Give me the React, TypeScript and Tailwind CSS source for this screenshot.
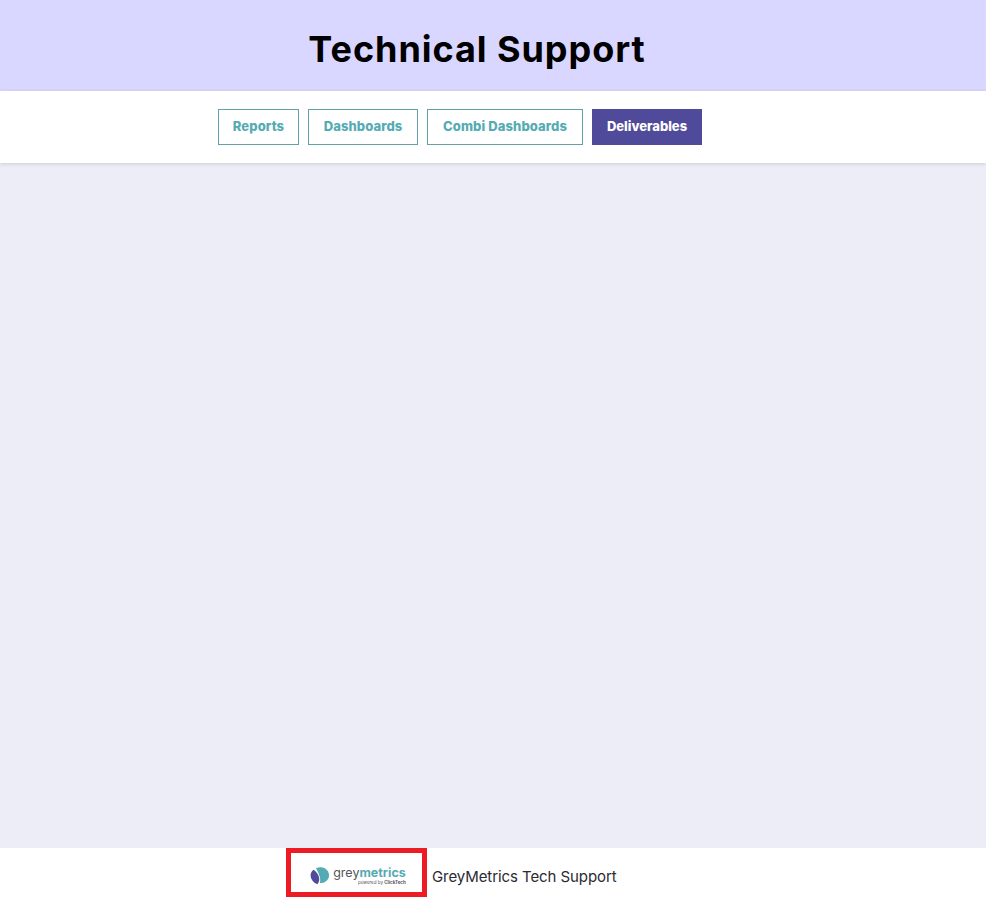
const font = "[font-family:Inter,'Liberation_Sans',sans-serif]";

const tabs = [
  { label: "Reports", width: "w-[81px]" },
  { label: "Dashboards", width: "w-[110px]" },
  { label: "Combi Dashboards", width: "w-[156px]" },
];

function Logo() {
  return (
    <div className="flex items-center">
      <svg width="20" height="18" viewBox="0 0 20 18" className="mr-[3px]">
        <path d="M3.600 2.800C1.300 4.300.2 6.800.7 9.600c.5 3.300 3.200 6.500 6.600 7.600 1.500-1.500 2.200-3.700 1.900-5.900C8.800 8.100 6.500 4.900 3.600 2.800z" fill="#4f4a99" />
        <path d="M6 1.200C8.100.2 10.500-.1 12.700.5c4 1 6.800 4.700 6.300 8.700-.4 3.600-3.400 6.300-7.200 6.700-.6.100-1.300.1-1.900 0 .5-2.100.4-4.300-.3-6.300C8.800 6.500 7.600 3.700 6 1.200z" fill="#55abb3" />
      </svg>
      <div className="flex flex-col items-end">
        <div className="text-[12.5px] leading-[14px] tracking-[0px]">
          <span className="text-[#55565a]">grey</span>
          <span className="font-bold text-[#55abb3]">metrics</span>
        </div>
        <div className="text-[4.500px] leading-[5px] text-[#55565a]">
          powered by <span className="font-bold">ClickTech</span>
        </div>
      </div>
    </div>
  );
}

export default function App() {
  return (
    <div className={`flex flex-col h-[897px] bg-[#ecedf6] ${font}`}>
      <header className="h-[91px] bg-[#d9d6ff] flex items-center justify-center pr-[32px] pt-[6px]">
        <h1 className="text-[36px] font-bold text-black tracking-[0.95px]">Technical Support</h1>
      </header>
      <nav className="h-[72px] bg-white shadow-[0_1px_4px_rgba(0,0,0,0.14)] flex items-center gap-[9px] pl-[218px]">
        {tabs.map((t) => (
          <button key={t.label} className={`h-[36px] ${t.width} border border-[#5fa3a8] text-[13px] font-extrabold tracking-[0.1px] text-[#55abb3] pb-[1px]`}>
            {t.label}
          </button>
        ))}
        <button className="h-[36px] w-[110px] bg-[#4f4a99] text-[13px] font-extrabold text-white pb-[1px]">Deliverables</button>
      </nav>
      <main className="flex-1" />
      <footer className="h-[49px] bg-white flex items-center pl-[286px]">
        <div className="w-[141px] h-[49px] border-[5px] border-[#ed1c24] flex items-center justify-center pl-[3px] pt-[6px]">
          <Logo />
        </div>
        <span className="ml-[5px] pt-[9px] text-[15px] tracking-[-0.08px] text-[#2b2b33]">GreyMetrics Tech Support</span>
      </footer>
    </div>
  );
}
